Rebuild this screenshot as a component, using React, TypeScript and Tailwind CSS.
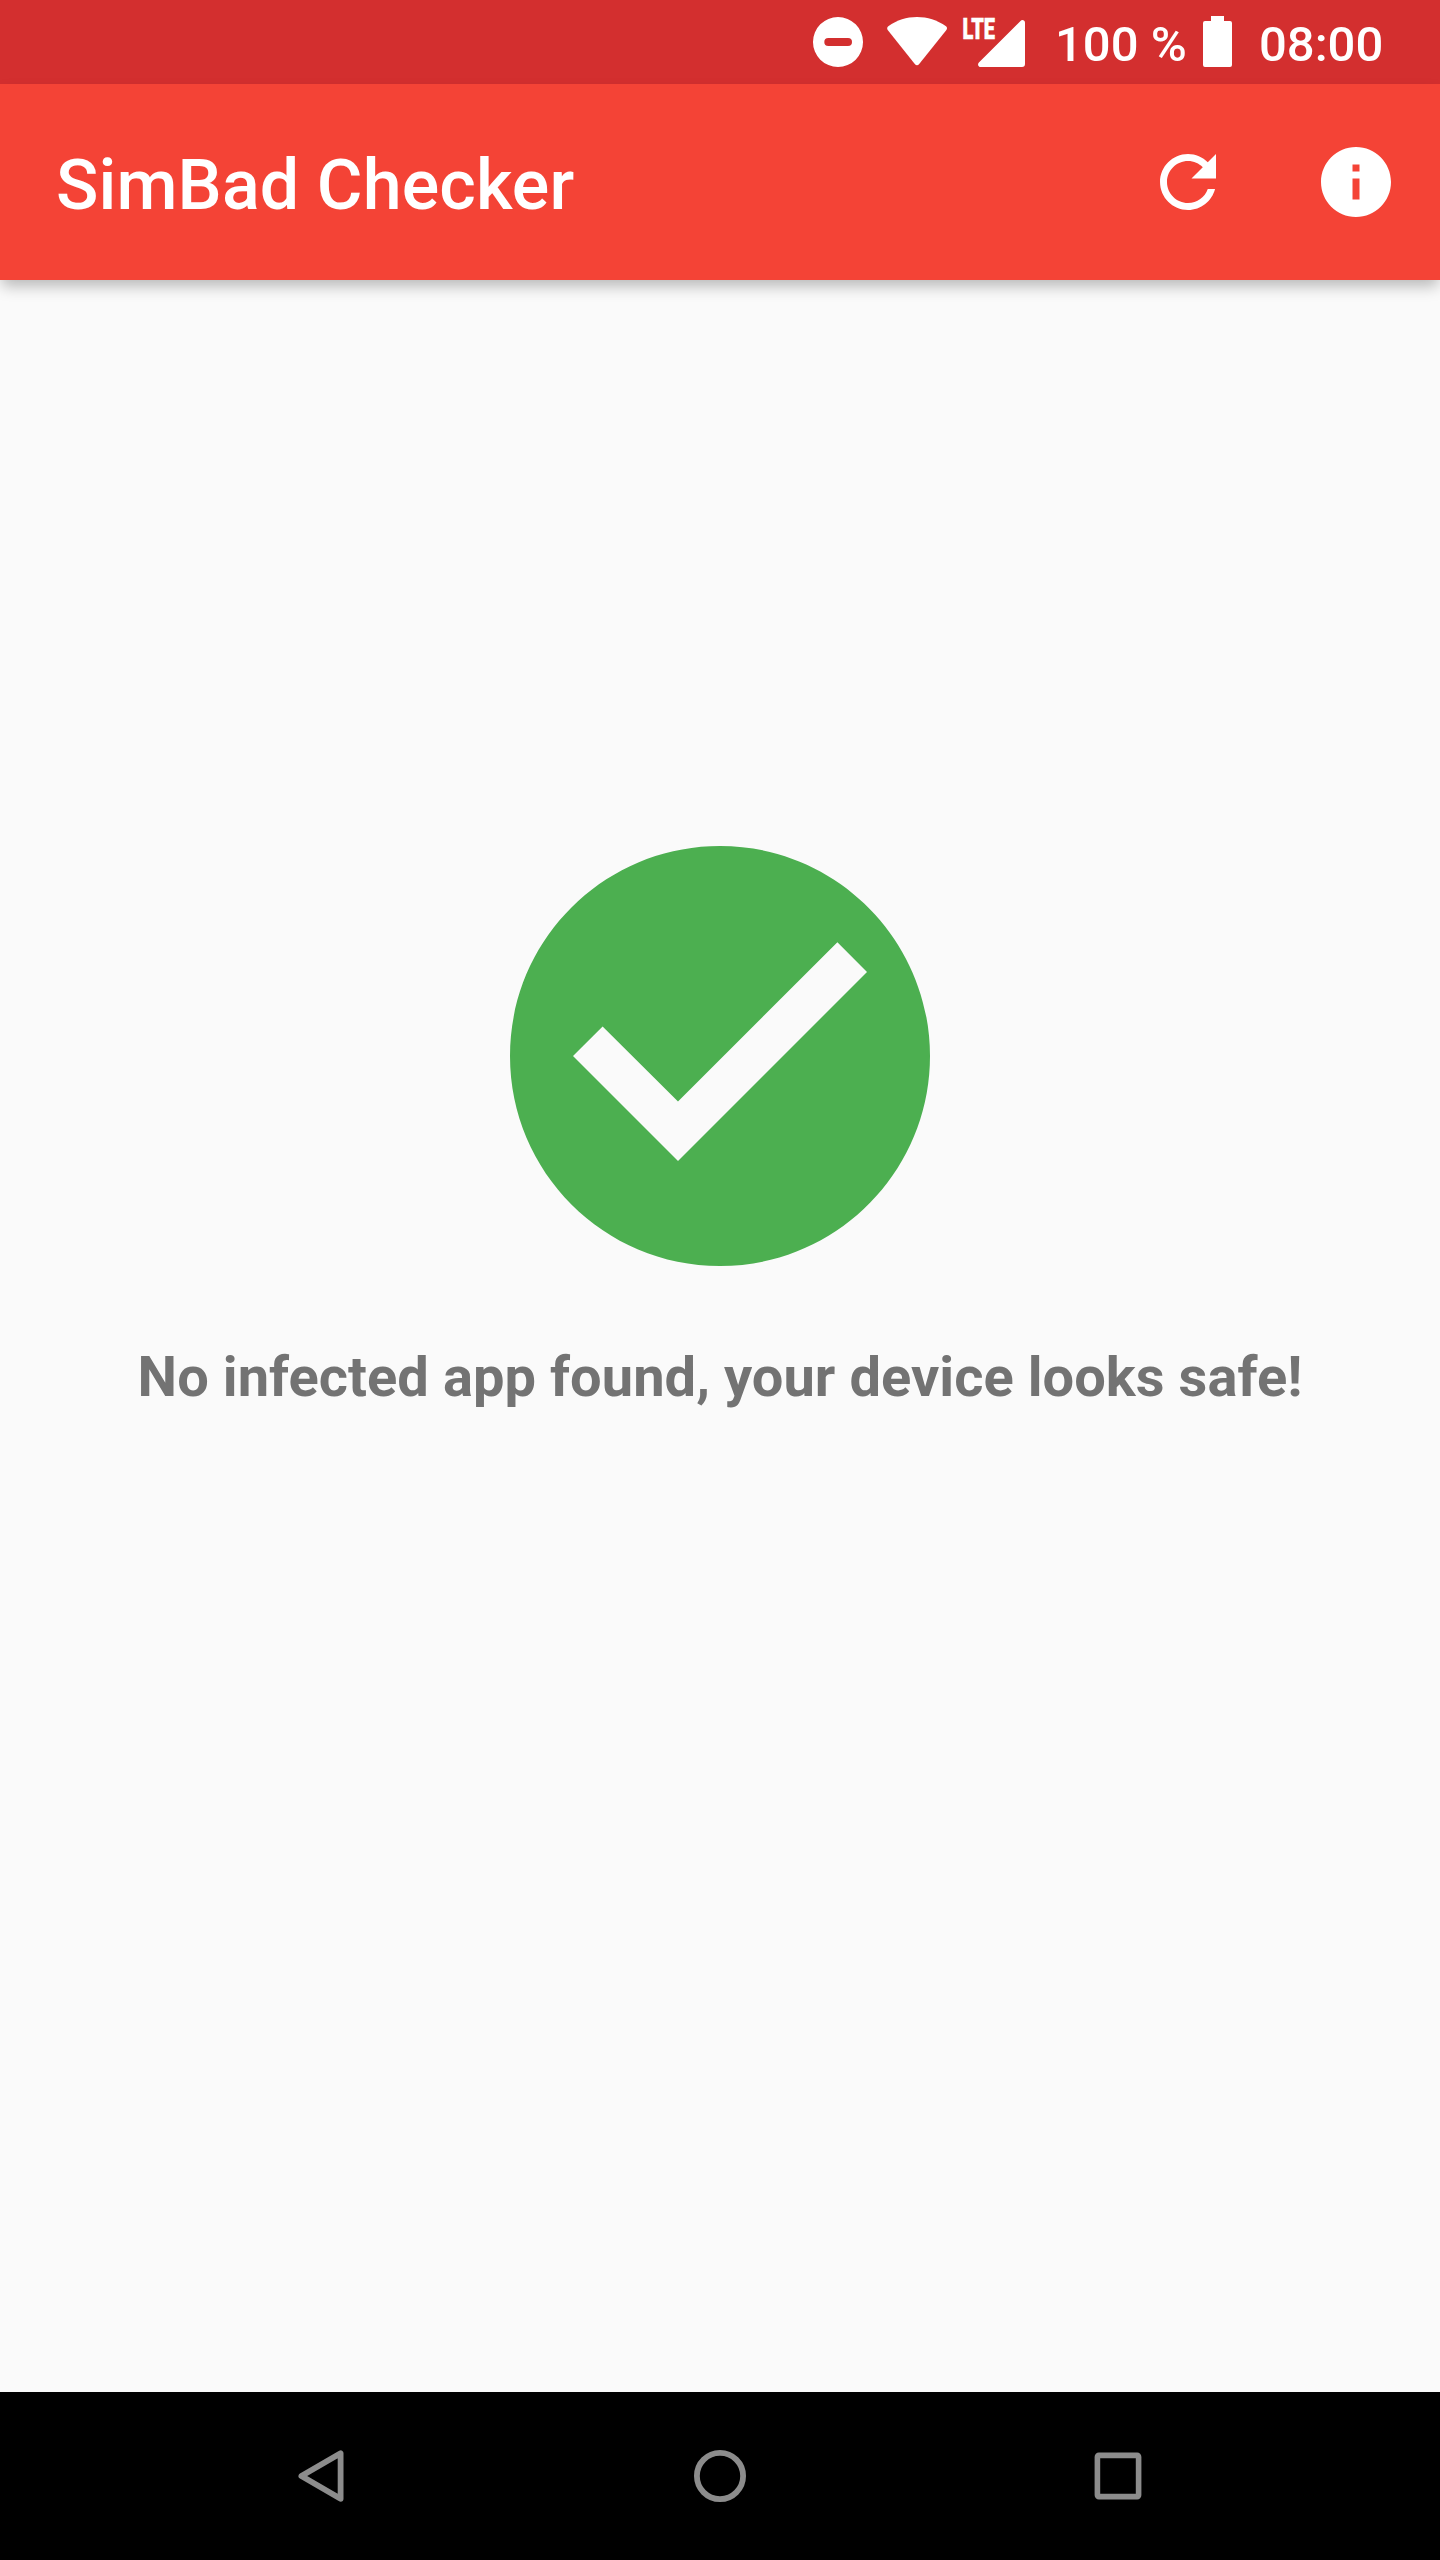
function StatusBar() {
  return (
    <div className="flex h-[84px] items-start bg-[#d32f2f] text-white">
      <svg className="ml-[796px] h-[84px] w-[250px] shrink-0" viewBox="796 0 250 84" fill="currentColor">
        <path
          fillRule="evenodd"
          d="M838 17a25 25 0 1 0 0 50a25 25 0 1 0 0-50zM828.3 38h19.7a4 4 0 0 1 0 8h-19.7a4 4 0 0 1 0-8z"
        />
        <path d="M888.3 26.2C897 20 906.500 17 917 17s20 3 29 9.200c1.200 1 1.300 2.600.4 3.800L919 64.200c-1.100 1.300-2.900 1.300-4 0L887.700 30c-.9-1.200-.6-2.800.6-3.800z" />
        <path d="M1020.500 20.900c1.700-1.700 4.500-.6 4.500 1.900V64a3 3 0 0 1-3 3h-41.200c-2.500 0-3.700-2.800-1.900-4.500z" />
        <text
          x="962.500"
          y="39.300"
          fontFamily="Roboto, sans-serif"
          fontWeight="900"
          fontSize="29.500"
          textLength="32.500"
          lengthAdjust="spacingAndGlyphs"
          stroke="currentColor"
          strokeWidth="0.600"
        >
          LTE
        </text>
      </svg>
      <span className="mt-[16px] ml-[9px] w-[148px] text-[49px] leading-[57px] font-medium whitespace-pre">100 %</span>
      <svg className="h-[84px] w-[29px] shrink-0" viewBox="0 0 29 84" fill="currentColor">
        <path d="M8 16h13v5h6a2 2 0 0 1 2 2v42a2 2 0 0 1-2 2H2a2 2 0 0 1-2-2V23a2 2 0 0 1 2-2h6z" />
      </svg>
      <span className="mt-[16px] ml-[27px] text-[49px] leading-[57px] font-medium">08:00</span>
    </div>
  );
}

function AppBar() {
  return (
    <header className="relative z-10 flex h-[196px] items-center bg-[#f44336] pr-[42px] pl-[56px] text-white shadow-[0_8px_14px_-2px_rgba(0,0,0,0.27)]">
      <h1 className="flex-1 pt-[6px] text-[70px] leading-[82px] font-medium tracking-[0.12px]">SimBad Checker</h1>
      <div className="flex gap-[84px]">
        <button aria-label="Refresh">
          <svg className="size-[84px]" viewBox="0 0 24 24" fill="currentColor">
            <path d="M17.650 6.350C16.200 4.900 14.210 4 12 4c-4.420 0-7.990 3.580-7.990 8s3.570 8 7.990 8c3.730 0 6.840-2.550 7.730-6h-2.080c-.82 2.330-3.040 4-5.650 4-3.310 0-6-2.690-6-6s2.690-6 6-6c1.660 0 3.140.69 4.220 1.780L13 11h7V4l-2.350 2.350z" />
          </svg>
        </button>
        <button aria-label="Info">
          <svg className="size-[84px]" viewBox="0 0 24 24" fill="currentColor">
            <path d="M12 2C6.480 2 2 6.480 2 12s4.480 10 10 10 10-4.480 10-10S17.520 2 12 2zm1 15h-2v-6h2v6zm0-8h-2V7h2v2z" />
          </svg>
        </button>
      </div>
    </header>
  );
}

function NavBar() {
  return (
    <nav className="flex h-[168px] items-center justify-between bg-black px-[280px] text-[#8c8c8c]">
      <svg className="size-[84px]" viewBox="0 0 84 84" fill="none" stroke="currentColor" strokeWidth="5.800" strokeLinejoin="round">
        <path d="M60.600 19.200v45.600L21.400 42z" />
      </svg>
      <svg className="size-[84px]" viewBox="0 0 84 84" fill="none" stroke="currentColor" strokeWidth="5.800">
        <circle cx="42" cy="42" r="23.100" />
      </svg>
      <svg className="size-[84px]" viewBox="0 0 84 84" fill="none" stroke="currentColor" strokeWidth="5.600" strokeLinejoin="round">
        <rect x="21.400" y="21.400" width="41.200" height="41.200" rx="1.500" />
      </svg>
    </nav>
  );
}

export default function App() {
  return (
    <div className="flex h-[2560px] w-[1440px] flex-col overflow-hidden bg-[#fafafa] font-['Roboto',sans-serif]">
      <StatusBar />
      <AppBar />
      <main className="flex flex-1 flex-col items-center pt-[524px]">
        <svg className="size-[504px]" viewBox="0 0 24 24" fill="#4caf50">
          <path d="M12 2C6.480 2 2 6.480 2 12s4.480 10 10 10 10-4.480 10-10S17.520 2 12 2zm-2 15l-5-5 1.410-1.410L10 14.170l7.590-7.590L19 8l-9 9z" />
        </svg>
        <p className="mt-[36px] text-[56px] leading-[66px] font-bold tracking-[0.05px] whitespace-nowrap text-[#737373]">
          No infected app found, your device looks safe!
        </p>
      </main>
      <NavBar />
    </div>
  );
}
